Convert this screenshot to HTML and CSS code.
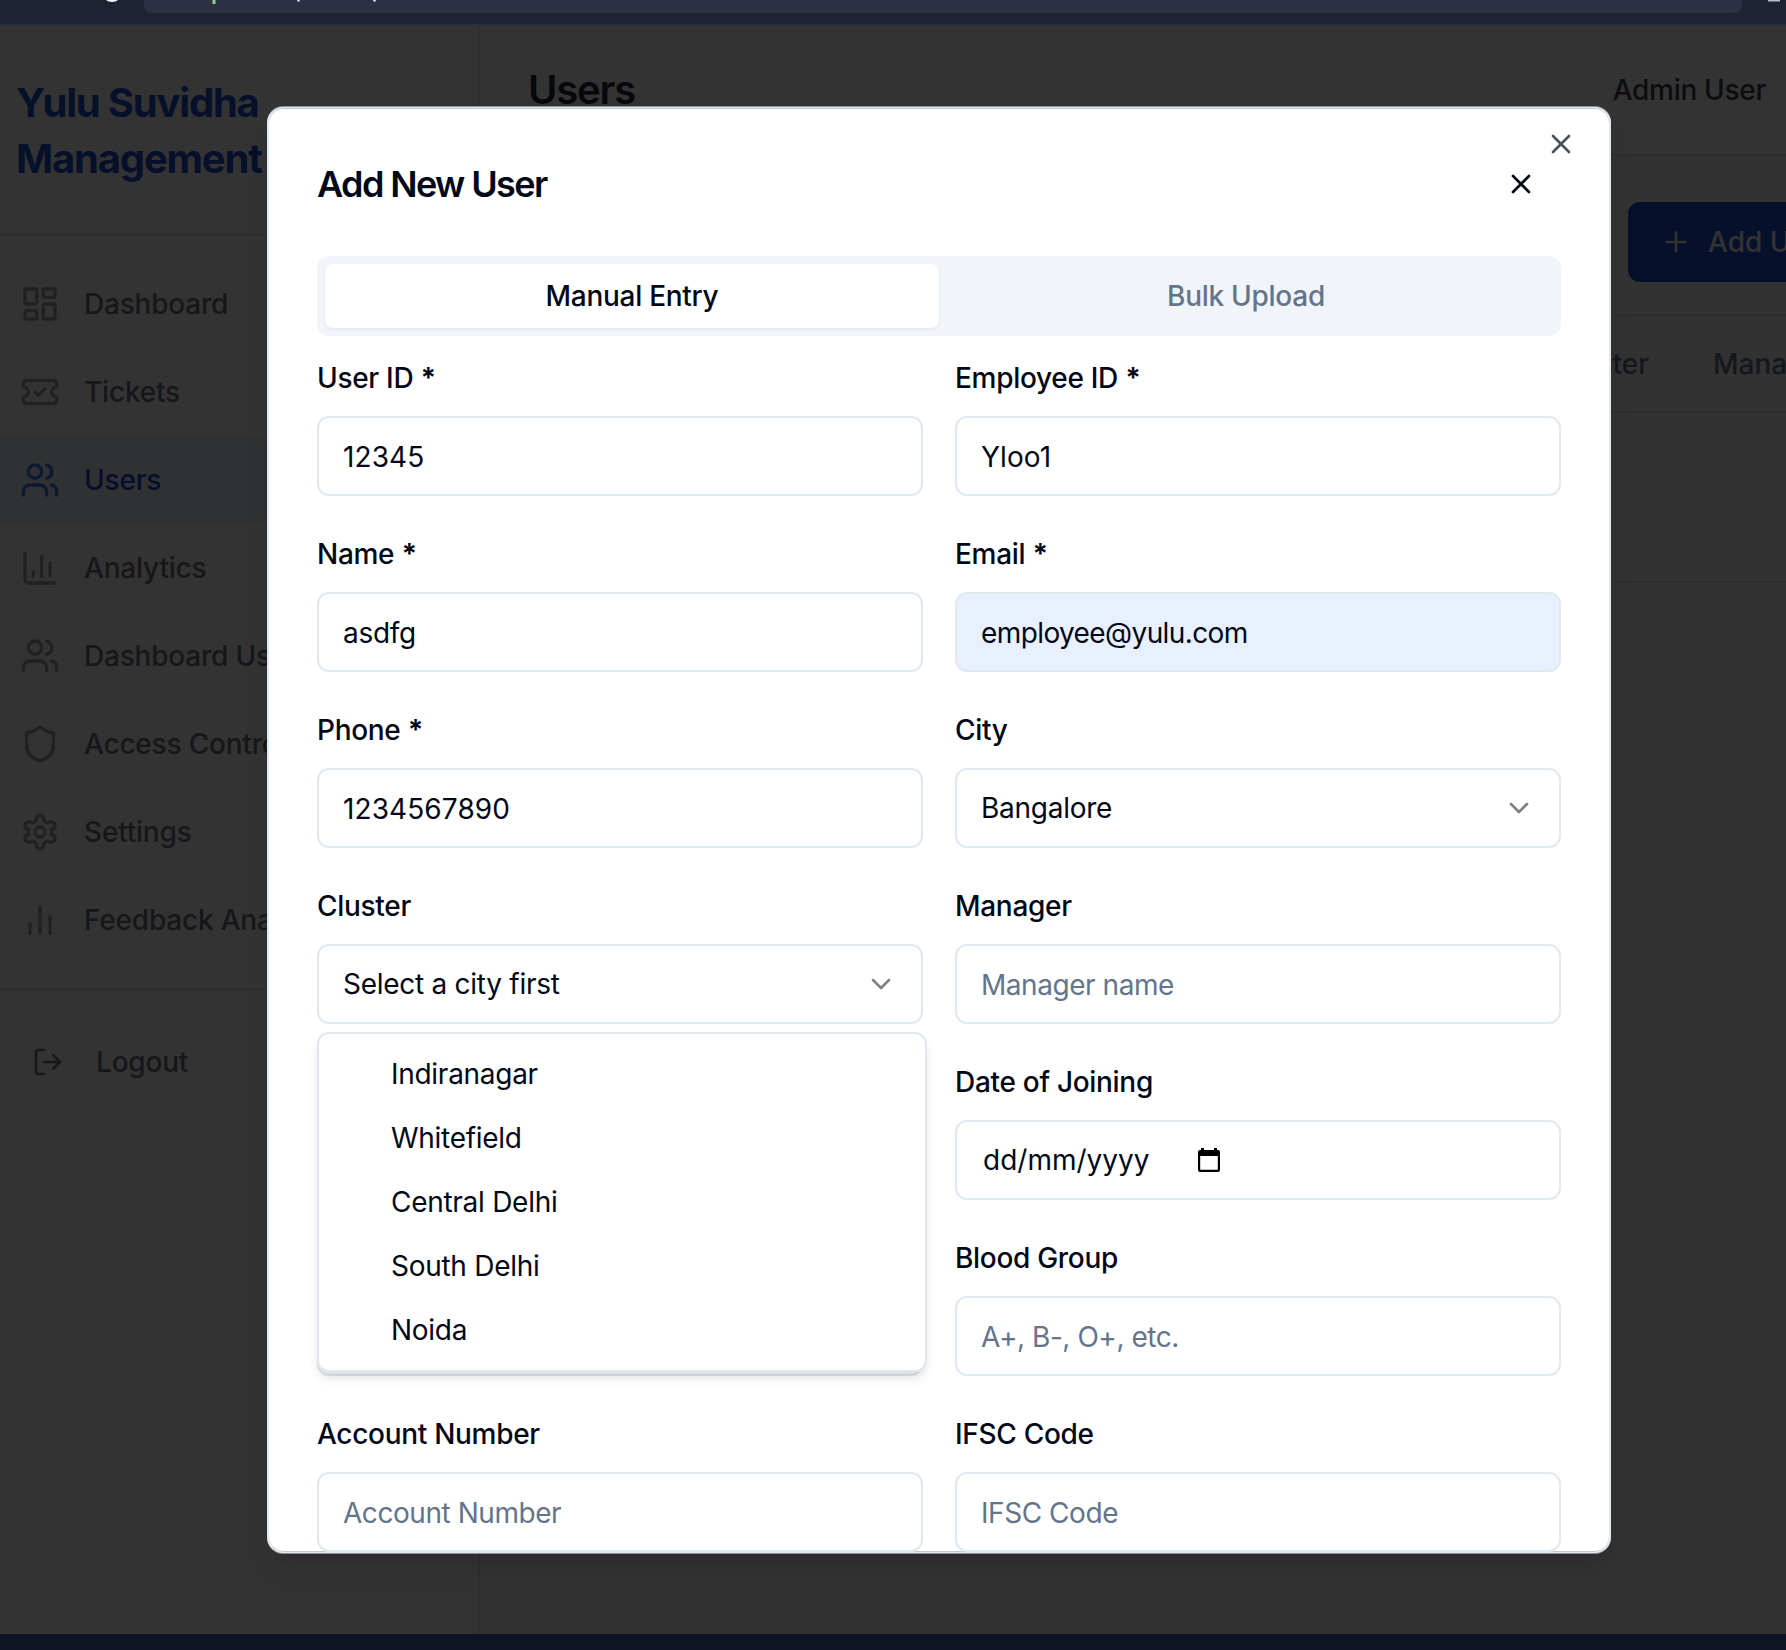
FILE: index.html
```html
<!DOCTYPE html>
<html lang="en">
<head>
<meta charset="utf-8">
<title>Users</title>
<link rel="stylesheet" href="styles.css">
</head>
<body>
<div class="browser-bar">
  <svg class="bar-left" width="144" height="14" viewBox="0 0 144 14"><circle cx="112" cy="-8.500" r="10.500" fill="#f1f3f8"/></svg>
  <div class="url">
    <svg width="300" height="6" viewBox="0 0 300 6"><path d="M70 0V4" stroke="#7fd48a" stroke-width="3"/><path d="M154.500 0V1.500M230.500 0V1.500" stroke="#e3e5ee" stroke-width="2.500"/></svg>
  </div>
  <svg class="bar-right" width="44" height="14" viewBox="0 0 44 14"><path d="M26 .5H38" stroke="#b9bcc6" stroke-width="2"/></svg>
</div>

<div class="app">
  <aside class="sidebar">
    <div class="brand">Yulu Suvidha<br>Management</div>
    <nav class="nav">
      <a class="nav-item"><svg class="icon" viewBox="0 0 24 24"><rect width="7" height="9" x="3" y="3" rx="1"/><rect width="7" height="5" x="14" y="3" rx="1"/><rect width="7" height="9" x="14" y="12" rx="1"/><rect width="7" height="5" x="3" y="16" rx="1"/></svg><span>Dashboard</span></a>
      <a class="nav-item"><svg class="icon" viewBox="0 0 24 24"><path d="M2 9a3 3 0 0 1 0 6v2a2 2 0 0 0 2 2h16a2 2 0 0 0 2-2v-2a3 3 0 0 1 0-6V7a2 2 0 0 0-2-2H4a2 2 0 0 0-2 2Z"/><path d="m9 12 2 2 4-4"/></svg><span>Tickets</span></a>
      <a class="nav-item active"><svg class="icon" viewBox="0 0 24 24"><path d="M16 21v-2a4 4 0 0 0-4-4H6a4 4 0 0 0-4 4v2"/><circle cx="9" cy="7" r="4"/><path d="M22 21v-2a4 4 0 0 0-3-3.870"/><path d="M16 3.130a4 4 0 0 1 0 7.750"/></svg><span>Users</span></a>
      <a class="nav-item"><svg class="icon" viewBox="0 0 24 24"><path d="M3 3v16a2 2 0 0 0 2 2h16"/><path d="M18 17V9"/><path d="M13 17V5"/><path d="M8 17v-3"/></svg><span>Analytics</span></a>
      <a class="nav-item"><svg class="icon" viewBox="0 0 24 24"><path d="M16 21v-2a4 4 0 0 0-4-4H6a4 4 0 0 0-4 4v2"/><circle cx="9" cy="7" r="4"/><path d="M22 21v-2a4 4 0 0 0-3-3.870"/><path d="M16 3.130a4 4 0 0 1 0 7.750"/></svg><span>Dashboard Users</span></a>
      <a class="nav-item"><svg class="icon" viewBox="0 0 24 24"><path d="M20 13c0 5-3.500 7.500-7.660 8.950a1 1 0 0 1-.67-.01C7.500 20.500 4 18 4 13V6a1 1 0 0 1 1-1c2 0 4.500-1.200 6.240-2.720a1.170 1.170 0 0 1 1.520 0C14.510 3.810 17 5 19 5a1 1 0 0 1 1 1z"/></svg><span>Access Control</span></a>
      <a class="nav-item"><svg class="icon" viewBox="0 0 24 24"><path d="M12.220 2h-.44a2 2 0 0 0-2 2v.18a2 2 0 0 1-1 1.730l-.43.25a2 2 0 0 1-2 0l-.15-.08a2 2 0 0 0-2.730.73l-.22.38a2 2 0 0 0 .73 2.730l.15.1a2 2 0 0 1 1 1.720v.51a2 2 0 0 1-1 1.740l-.15.09a2 2 0 0 0-.73 2.730l.22.38a2 2 0 0 0 2.730.73l.15-.08a2 2 0 0 1 2 0l.43.25a2 2 0 0 1 1 1.730V20a2 2 0 0 0 2 2h.44a2 2 0 0 0 2-2v-.18a2 2 0 0 1 1-1.730l.43-.25a2 2 0 0 1 2 0l.15.08a2 2 0 0 0 2.730-.73l.22-.39a2 2 0 0 0-.73-2.730l-.15-.08a2 2 0 0 1-1-1.740v-.5a2 2 0 0 1 1-1.740l.15-.09a2 2 0 0 0 .73-2.730l-.22-.38a2 2 0 0 0-2.730-.73l-.15.08a2 2 0 0 1-2 0l-.43-.25a2 2 0 0 1-1-1.730V4a2 2 0 0 0-2-2z"/><circle cx="12" cy="12" r="3"/></svg><span>Settings</span></a>
      <a class="nav-item"><svg class="icon" viewBox="0 0 24 24"><path d="M18 20V10"/><path d="M12 20V4"/><path d="M6 20v-6"/></svg><span>Feedback Analysis</span></a>
    </nav>
    <div class="logout"><svg class="icon" viewBox="0 0 24 24"><path d="M9 21H5a2 2 0 0 1-2-2V5a2 2 0 0 1 2-2h4"/><path d="m16 17 5-5-5-5"/><path d="M21 12H9"/></svg><span>Logout</span></div>
  </aside>
  <main class="main">
    <header class="topbar"><h1>Users</h1><span class="account">Admin User</span></header>
    <div class="toolbar"><button class="add-btn"><svg class="icon" viewBox="0 0 24 24"><path d="M5 12h14"/><path d="M12 5v14"/></svg><span>Add User</span></button></div>
    <div class="table-head"><span class="col-cluster">Cluster</span><span>Manager</span></div>
    <div class="table-row"></div>
  </main>

  <div class="overlay">
    <section class="modal">
      <svg class="icon dialog-close" viewBox="0 0 24 24"><path d="M18 6 6 18"/><path d="m6 6 12 12"/></svg>
      <div class="modal-head">
        <h2>Add New User</h2>
        <svg class="icon" viewBox="0 0 24 24"><path d="M18 6 6 18"/><path d="m6 6 12 12"/></svg>
      </div>
      <div class="tabs"><div class="tab selected">Manual Entry</div><div class="tab">Bulk Upload</div></div>
      <div class="form">
        <div class="field"><label>User ID <b>*</b></label><div class="input digits">12345</div></div>
        <div class="field"><label>Employee ID <b>*</b></label><div class="input digits">Yloo1</div></div>
        <div class="field"><label>Name <b>*</b></label><div class="input">asdfg</div></div>
        <div class="field"><label>Email <b>*</b></label><div class="input autofill">employee@yulu.com</div></div>
        <div class="field"><label>Phone <b>*</b></label><div class="input digits">1234567890</div></div>
        <div class="field"><label>City</label><div class="input select"><span>Bangalore</span><svg class="icon" viewBox="0 0 24 24"><path d="m6 9 6 6 6-6"/></svg></div></div>
        <div class="field"><label>Cluster</label><div class="input select"><span>Select a city first</span><svg class="icon" viewBox="0 0 24 24"><path d="m6 9 6 6 6-6"/></svg></div>
          <ul class="menu"><li>Indiranagar</li><li>Whitefield</li><li>Central Delhi</li><li>South Delhi</li><li>Noida</li></ul>
        </div>
        <div class="field"><label>Manager</label><div class="input placeholder">Manager name</div></div>
        <div class="field"><label></label><div class="input"></div></div>
        <div class="field"><label>Date of Joining</label><div class="input date"><span>dd/mm/yyyy</span><svg class="calendar" width="24" height="26" viewBox="0 0 24 26"><path fill-rule="evenodd" d="M4 1h3v2h10V1h3v2h1a2 2 0 0 1 2 2v18a2 2 0 0 1-2 2H3a2 2 0 0 1-2-2V5a2 2 0 0 1 2-2h1zM3.200 9v13.800h17.600V9z"/></svg></div></div>
        <div class="field"><label></label><div class="input"></div></div>
        <div class="field"><label>Blood Group</label><div class="input placeholder">A+, B-, O+, etc.</div></div>
        <div class="field"><label>Account Number</label><div class="input placeholder">Account Number</div></div>
        <div class="field"><label>IFSC Code</label><div class="input placeholder">IFSC Code</div></div>
      </div>
    </section>
  </div>
</div>
<div class="bottom-bar"></div>
</body>
</html>
```
FILE: styles.css
```css
* { box-sizing: border-box; }
body {
  margin: 0;
  width: 1786px;
  height: 1650px;
  overflow: hidden;
  display: flex;
  flex-direction: column;
  font: 400 28px/40px Inter, "Liberation Sans", sans-serif;
  color: #020817;
  background: #0e1423;
}
h1, h2, ul { margin: 0; padding: 0; list-style: none; }
.icon {
  width: 32px;
  height: 32px;
  flex: none;
  fill: none;
  stroke: currentColor;
  stroke-width: 2;
  stroke-linecap: round;
  stroke-linejoin: round;
}

.browser-bar {
  height: 26px;
  flex: none;
  display: flex;
  align-items: flex-start;
  background: #1e2333;
  border-bottom: 2px solid #2b2d42;
}
.browser-bar svg { display: block; flex: none; }
.url { flex: 1; height: 13px; background: #2d3044; border-radius: 0 0 8px 8px; }

.app { position: relative; flex: 1; display: flex; overflow: hidden; background: #f9fafb; }
.bottom-bar { height: 16px; flex: none; background: #0e1423; }

.sidebar { width: 480px; flex: none; background: #fff; border-right: 2px solid #e5e7eb; }
.brand {
  height: 210px;
  padding: 49px 16px 0;
  font-size: 40px;
  line-height: 56px;
  font-weight: 700;
  letter-spacing: -1.2px;
  color: #1e4fd0;
  border-bottom: 2px solid #e5e7eb;
}
.nav { padding-top: 24px; height: 754px; border-bottom: 2px solid #e5e7eb; }
.nav-item {
  height: 88px;
  display: flex;
  align-items: center;
  gap: 24px;
  padding-left: 20px;
  font-weight: 500;
  letter-spacing: -0.2px;
  color: #6b7280;
  white-space: nowrap;
}
.nav-item .icon { width: 40px; height: 40px; color: #9ca3af; }
.nav-item.active { background: #eff6ff; color: #1d4ed8; }
.nav-item.active .icon { color: #3b82f6; }
.logout {
  display: flex;
  align-items: center;
  gap: 32px;
  padding: 52px 0 0 32px;
  font-weight: 500;
  letter-spacing: -0.2px;
  color: #6b7280;
}

.main { flex: 1; min-width: 0; }
.topbar {
  height: 130px;
  display: flex;
  align-items: center;
  justify-content: space-between;
  padding: 0 20px 0 48px;
  background: #fff;
  border-bottom: 2px solid #e5e7eb;
}
.topbar h1 { font-size: 40px; font-weight: 600; letter-spacing: -1.2px; color: #1f2937; }
.account { font-weight: 500; letter-spacing: -0.3px; color: #374151; }
.toolbar { height: 160px; padding: 46px 0 0 1148px; border-bottom: 2px solid #e5e7eb; }
.add-btn {
  width: 240px;
  height: 80px;
  display: flex;
  align-items: center;
  gap: 16px;
  padding: 0 32px;
  border: 0;
  border-radius: 12px;
  background: #1e4fd0;
  color: #f8fafc;
  font: inherit;
  font-weight: 500;
  white-space: nowrap;
}
.table-head {
  height: 97px;
  display: flex;
  align-items: center;
  padding-left: 1073px;
  font-weight: 500;
  color: #64748b;
  border-bottom: 2px solid #e5e7eb;
}
.col-cluster { width: 160px; flex: none; }
.table-row { height: 170px; border-bottom: 2px solid #e5e7eb; }

.overlay { position: absolute; inset: 0; background: rgba(0, 0, 0, .8); }
.modal {
  position: absolute;
  left: 267px;
  top: 81px;
  width: 1344px;
  height: 1446px;
  padding: 0 48px;
  overflow: hidden;
  background: #fff;
  border: solid #e2e8f0;
  border-width: 1px 2px;
  border-radius: 16px;
  box-shadow:
    0 -1px 0 #8d9096,
    0 1px 0 #8d9096,
    inset 0 1px 0 #c4c8ce,
    inset 0 -1px 0 #c4c8ce,
    0 20px 30px -6px rgba(0, 0, 0, .1),
    0 8px 12px -8px rgba(0, 0, 0, .1);
}
.dialog-close { position: absolute; top: 20px; right: 32px; opacity: .7; }
.modal-head { height: 148px; display: flex; align-items: center; justify-content: space-between; padding: 4px 24px 0 0; }
.modal-head h2 { font-size: 36px; font-weight: 600; letter-spacing: -1.6px; }
.tabs { display: flex; height: 80px; padding: 8px; background: #f1f5f9; border-radius: 12px; }
.tab {
  flex: 1;
  display: flex;
  align-items: center;
  justify-content: center;
  font-weight: 500;
  letter-spacing: -0.28px;
  color: #64748b;
  border-radius: 8px;
}
.tab.selected { background: #fff; color: #020817; box-shadow: 0 2px 4px rgba(0, 0, 0, .05); }

.form { display: grid; grid-template-columns: 1fr 1fr; gap: 32px; padding-top: 16px; }
.field { display: flex; flex-direction: column; gap: 16px; position: relative; }
.field label { height: 48px; padding-top: 6px; font-weight: 500; letter-spacing: -0.3px; }
.field label b { font-weight: 700; }
.input {
  height: 80px;
  padding: 2px 24px 0;
  display: flex;
  align-items: center;
  border: 2px solid #e2e8f0;
  border-radius: 12px;
  background: #fff;
  letter-spacing: -0.3px;
}
.digits { letter-spacing: 0.1px; }
.placeholder { color: #64748b; letter-spacing: -0.45px; }
.autofill { background: #e8f0fe; letter-spacing: -0.6px; }
.select { justify-content: space-between; padding-top: 0; letter-spacing: -0.27px; }
.select .icon { opacity: .5; }
.date { padding: 0 26px; gap: 48px; letter-spacing: 0; }
.calendar { fill: #000; }
.menu {
  position: absolute;
  z-index: 1;
  left: 0;
  top: 152px;
  width: 610px;
  padding: 8px;
  background: #fff;
  border: 2px solid #e2e8f0;
  border-radius: 12px;
  letter-spacing: -0.28px;
  box-shadow: 0 8px 12px -2px rgba(0, 0, 0, .1), 0 4px 8px -4px rgba(0, 0, 0, .1);
}
.menu li { height: 64px; padding: 12px 16px 12px 64px; }
```
